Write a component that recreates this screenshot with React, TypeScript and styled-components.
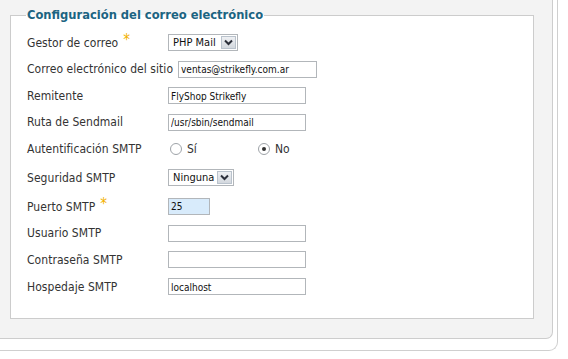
import React from "react";
import styled, { createGlobalStyle } from "styled-components";

const GlobalStyle = createGlobalStyle`
  body {
    margin: 0;
    background: #ffffff;
    font-family: "DejaVu Sans Condensed", "Liberation Sans", sans-serif;
  }
`;

const OuterPanel = styled.div`
  width: 558px;
  height: 351px;
  box-sizing: border-box;
  background: #ffffff;
  border-right: 1px solid #cfcfcf;
  border-bottom: 1px solid #cfcfcf;
  border-bottom-right-radius: 9px;
  padding: 0 4px 11px 0;
`;

const InnerPanel = styled.div`
  height: 100%;
  box-sizing: border-box;
  background: #f3f3f3;
  border-right: 1px solid #cdcdcd;
  border-bottom: 1px solid #cdcdcd;
  border-bottom-right-radius: 7px;
  padding: 7px 18px 19px 10px;
`;

const Fieldset = styled.fieldset`
  margin: 0;
  height: 100%;
  box-sizing: border-box;
  min-width: 0;
  border: 1px solid #cccccc;
  background: #ffffff;
  padding: 6px 10px 0 15px;
`;

const Legend = styled.legend`
  padding: 0 1px;
  font-size: 12.8px;
  line-height: 16px;
  font-weight: bold;
  color: #1b6482;
`;

const Row = styled.div<{ $h: number }>`
  display: flex;
  align-items: center;
  height: ${({ $h }) => $h}px;
  padding-left: 1px;
`;

const Label = styled.label`
  flex: 0 0 auto;
  min-width: 136px;
  padding-right: 5px;
  font-size: 12px;
  letter-spacing: 0.05px;
  color: #333333;
  white-space: nowrap;
`;

const Required = styled.span`
  color: #f2b100;
  font-size: 15px;
  margin-left: 5px;
  position: relative;
  top: -2px;
`;

const TextInput = styled.input<{ $w: number; $bg?: string }>`
  width: ${({ $w }) => $w}px;
  height: 17px;
  box-sizing: border-box;
  margin: 0;
  padding: 1px 2px 0;
  border: 1px solid #b2b6ba;
  background: ${({ $bg }) => $bg || "#ffffff"};
  font-family: "DejaVu Sans Condensed", "Liberation Sans", sans-serif;
  font-size: 10px;
  color: #111111;
  outline: none;
`;

const SelectBox = styled.div<{ $w: number }>`
  display: inline-flex;
  align-items: center;
  justify-content: space-between;
  width: ${({ $w }) => $w}px;
  height: 17px;
  box-sizing: border-box;
  border: 1px solid #b2b6ba;
  background: #ffffff;
  padding: 0 1px 0 4px;
  font-size: 11px;
  color: #111111;
`;

const SelectButton = styled.span`
  display: inline-flex;
  align-items: center;
  justify-content: center;
  width: 15px;
  height: 13px;
  box-sizing: border-box;
  border: 1px solid #b9c2cc;
  background: linear-gradient(#eef0f3, #d3d8de);
`;

const RadioGroup = styled.div`
  display: flex;
  margin-left: 2px;
`;

const RadioOption = styled.span`
  display: inline-flex;
  align-items: center;
  gap: 5px;
  width: 88px;
  font-size: 12px;
  color: #333333;
`;

const RadioDot = styled.span<{ $checked?: boolean }>`
  position: relative;
  width: 12px;
  height: 12px;
  box-sizing: border-box;
  border: 1px solid #9ea3a8;
  border-radius: 50%;
  background: #ffffff;

  &::after {
    content: "";
    display: ${({ $checked }) => ($checked ? "block" : "none")};
    position: absolute;
    left: 3px;
    top: 3px;
    width: 4px;
    height: 4px;
    border-radius: 50%;
    background: #333333;
  }
`;

const Chevron = () => (
  <svg width="9" height="7" viewBox="0 0 9 7">
    <path d="M1 1.5 L4.5 5 L8 1.5" fill="none" stroke="#2b2f3a" strokeWidth="2" />
  </svg>
);

const Select: React.FC<{ value: string; width: number }> = ({ value, width }) => (
  <SelectBox $w={width}>
    <span>{value}</span>
    <SelectButton>
      <Chevron />
    </SelectButton>
  </SelectBox>
);

const App: React.FC = () => {
  return (
    <>
      <GlobalStyle />
      <OuterPanel>
        <InnerPanel>
          <Fieldset>
            <Legend>Configuración del correo electrónico</Legend>
            <Row $h={26.7}>
              <Label>
                Gestor de correo<Required>*</Required>
              </Label>
              <Select value="PHP Mail" width={70} />
            </Row>
            <Row $h={26.7}>
              <Label>Correo electrónico del sitio</Label>
              <TextInput $w={139} defaultValue="ventas@strikefly.com.ar" readOnly />
            </Row>
            <Row $h={26.7}>
              <Label>Remitente</Label>
              <TextInput $w={138} defaultValue="FlyShop Strikefly" readOnly />
            </Row>
            <Row $h={26.7}>
              <Label>Ruta de Sendmail</Label>
              <TextInput $w={138} defaultValue="/usr/sbin/sendmail" readOnly />
            </Row>
            <Row $h={26.7}>
              <Label>Autentificación SMTP</Label>
              <RadioGroup>
                <RadioOption>
                  <RadioDot />
                  Sí
                </RadioOption>
                <RadioOption>
                  <RadioDot $checked />
                  No
                </RadioOption>
              </RadioGroup>
            </Row>
            <Row $h={30.7}>
              <Label>Seguridad SMTP</Label>
              <Select value="Ninguna" width={66} />
            </Row>
            <Row $h={26.7}>
              <Label>
                Puerto SMTP<Required>*</Required>
              </Label>
              <TextInput $w={42} $bg="#d8ebfb" defaultValue="25" readOnly />
            </Row>
            <Row $h={26.7}>
              <Label>Usuario SMTP</Label>
              <TextInput $w={138} defaultValue="" readOnly />
            </Row>
            <Row $h={26.7}>
              <Label>Contraseña SMTP</Label>
              <TextInput $w={138} type="password" defaultValue="" readOnly />
            </Row>
            <Row $h={26.7}>
              <Label>Hospedaje SMTP</Label>
              <TextInput $w={138} defaultValue="localhost" readOnly />
            </Row>
          </Fieldset>
        </InnerPanel>
      </OuterPanel>
    </>
  );
};

export default App;
